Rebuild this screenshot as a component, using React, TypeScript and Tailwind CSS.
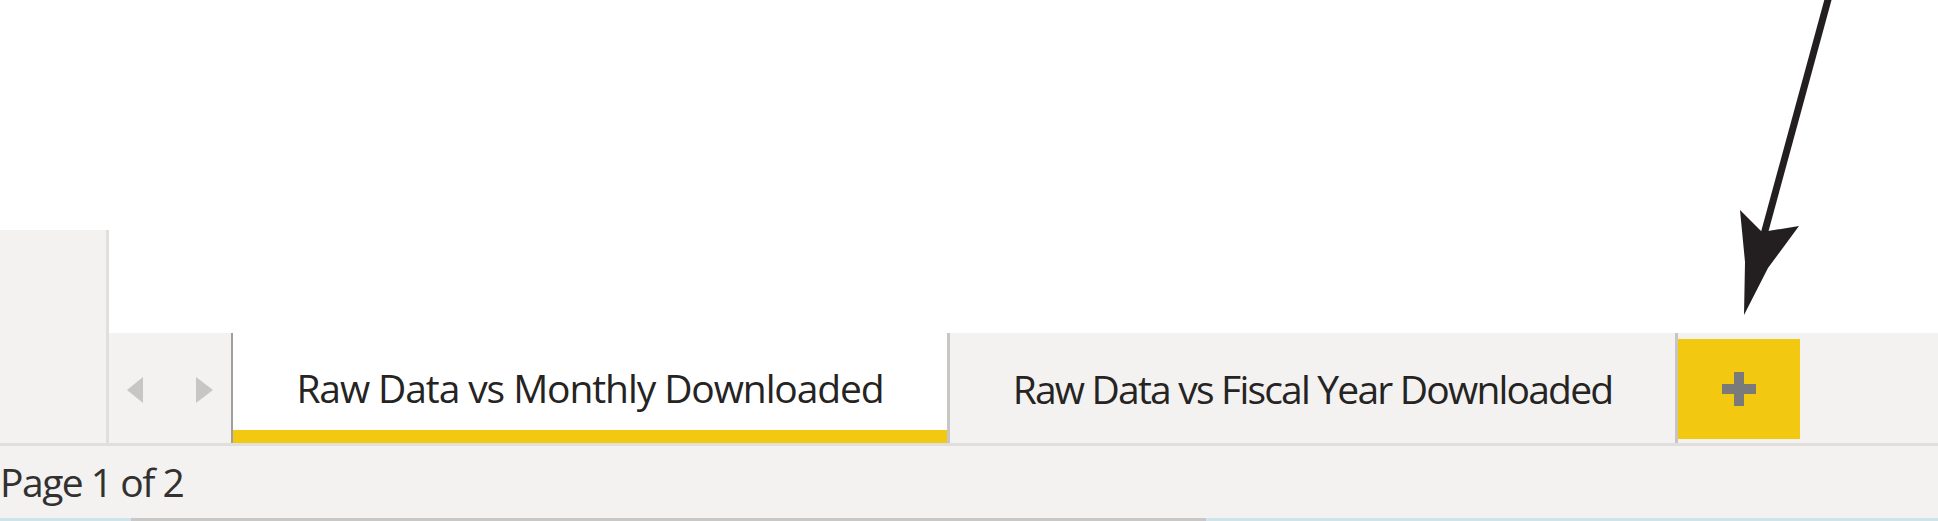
const tabText = "text-[39px] text-[#252423] leading-none whitespace-nowrap";

const App = () => {
  return (
    <div className="relative w-[1938px] h-[521px] bg-white flex flex-col overflow-hidden font-['Open_Sans',sans-serif]">
      <div className="flex h-[443px]">
        <div className="w-[109px] flex flex-col">
          <div className="h-[230px] bg-white" />
          <div className="flex-1 bg-[#f3f2f1] border-r-[3px] border-[#e1dfdd]" />
        </div>
        <div className="flex-1 flex flex-col">
          <div className="flex-1 bg-white" />
          <div className="h-[110px] flex bg-[#f3f2f1]">
            <div className="w-[122px] flex items-start pt-[44px]">
              <div className="ml-[18px] w-0 h-0 border-y-[13px] border-y-transparent border-r-[16px] border-r-[#c8c6c4]" />
              <div className="ml-[53px] w-0 h-0 border-y-[13px] border-y-transparent border-l-[17px] border-l-[#c8c6c4]" />
            </div>
            <div className="w-[2px] bg-[#a19f9d]" />
            <div className="w-[714px] bg-white flex flex-col">
              <div className="flex-1 flex items-center justify-center pt-[12px]">
                <span className={`${tabText} tracking-[-1.1px]`}>Raw Data vs Monthly Downloaded</span>
              </div>
              <div className="h-[13px] bg-[#f2c811]" />
            </div>
            <div className="w-[3px] bg-[#c8c6c4]" />
            <div className="w-[725px] flex items-center justify-center pt-[1px]">
              <span className={`${tabText} tracking-[-1.8px]`}>Raw Data vs Fiscal Year Downloaded</span>
            </div>
            <div className="w-[3px] bg-[#c8c6c4]" />
            <div className="w-[122px] mt-[6px] h-[100px] bg-[#f2c811] flex items-center justify-center">
              <svg width="34" height="34" viewBox="0 0 34 34">
                <rect x="12" y="0" width="10" height="34" fill="#7a7a7a" />
                <rect x="0" y="12" width="34" height="10" fill="#7a7a7a" />
              </svg>
            </div>
          </div>
        </div>
      </div>
      <div className="h-[3px] bg-[#e1dfdd]" />
      <div className="h-[72px] bg-[#f3f2f1] flex items-center">
        <span className="text-[39px] tracking-[-1.5px] text-[#323130] leading-none whitespace-nowrap pb-[2px]">Page 1 of 2</span>
      </div>
      <div className="h-[3px] bg-[#cfe4ea] flex">
        <div className="ml-[131px] w-[1075px] bg-[#c8c8c8]" />
      </div>

      <svg className="absolute left-[1700px] top-0" width="150" height="320" viewBox="0 0 150 320">
        <line x1="129" y1="-4" x2="63" y2="238" stroke="#231f20" strokeWidth="7" />
        <polygon points="44,315 45,262 40,210 62,232 99,226 68,268" fill="#231f20" />
      </svg>
    </div>
  );
};

export default App;
